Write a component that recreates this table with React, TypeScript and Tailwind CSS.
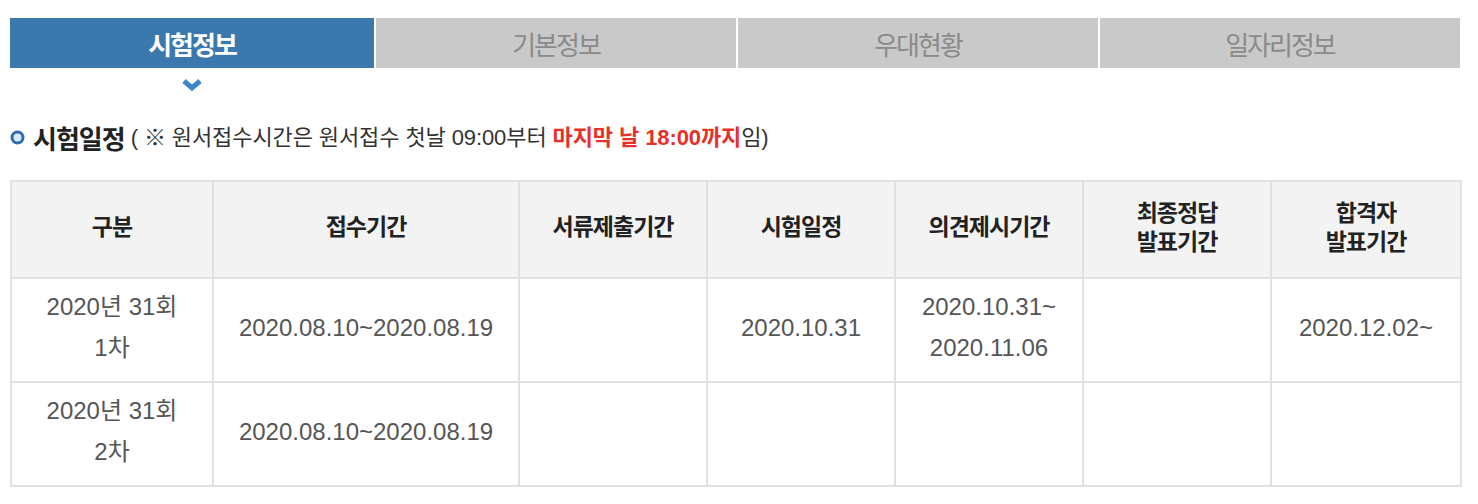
import React from 'react'

const tabs = ['시험정보', '기본정보', '우대현황', '일자리정보']

const headers: string[][] = [
  ['구분'],
  ['접수기간'],
  ['서류제출기간'],
  ['시험일정'],
  ['의견제시기간'],
  ['최종정답', '발표기간'],
  ['합격자', '발표기간'],
]

const colWidths = ['w-[202px]', 'w-[306px]', 'w-[188px]', 'w-[188px]', 'w-[188px]', 'w-[188px]', 'w-[190px]']

const rows: string[][][] = [
  [['2020년 31회', '1차'], ['2020.08.10~2020.08.19'], [], ['2020.10.31'], ['2020.10.31~', '2020.11.06'], [], ['2020.12.02~']],
  [['2020년 31회', '2차'], ['2020.08.10~2020.08.19'], [], [], [], [], []],
]

function Bullet() {
  return (
    <svg width="15" height="15" viewBox="0 0 15 15" className="shrink-0">
      <circle cx="7.5" cy="7.5" r="5.5" fill="#dbe9f6" stroke="#2f6cae" strokeWidth="3" />
    </svg>
  )
}

export default function App() {
  return (
    <div className="w-[1478px] h-[504px] bg-white pl-[10px] pt-[18px] font-['Liberation_Sans','Noto_Sans_CJK_KR',sans-serif]">
      <div className="w-[1450px]">
        {/* Tabs */}
        <div className="flex gap-[2px]">
          {tabs.map((t, i) => (
            <div
              key={t}
              className={
                i === 0
                  ? 'w-[364px] h-[50px] flex items-center justify-center bg-[#3a78ad] text-white font-bold text-[26px] tracking-[-2px] font-["Noto_Sans_CJK_KR",sans-serif]'
                  : 'flex-1 h-[50px] flex items-center justify-center bg-[#c9c9c9] text-[#8a8a8a] text-[26px] tracking-[-2px] font-["Noto_Sans_CJK_KR",sans-serif]'
              }
            >
              {t}
            </div>
          ))}
        </div>

        {/* active marker */}
        <div className="flex w-[364px] justify-center pt-[10px]">
          <svg width="22" height="14" viewBox="0 0 22 14">
            <polyline points="3,3 11,10 19,3" fill="none" stroke="#3f87c9" strokeWidth="5" strokeLinejoin="miter" />
          </svg>
        </div>

        {/* Heading */}
        <div className="flex items-center mt-[27px] h-[36px]">
          <Bullet />
          <span className="ml-[8px] font-['Noto_Sans_CJK_KR',sans-serif] font-bold text-[26px] tracking-[-1px] text-[#222]">시험일정</span>
          <span className="ml-[6px] text-[22px] tracking-[-0.1px] text-[#333]">
            ( ※ 원서접수시간은 원서접수 첫날 09:00부터{' '}
            <span className="font-bold text-[#e8302a]">마지막 날 18:00까지</span>임)
          </span>
        </div>

        {/* Table */}
        <table className="mt-[25px] w-[1450px] border-collapse table-fixed border-2 border-[#e1e1e1]">
          <thead>
            <tr className="h-[97px] bg-[#f3f3f3]">
              {headers.map((h, i) => (
                <th
                  key={i}
                  className={`${colWidths[i]} border-2 border-[#e1e1e1] font-['Noto_Sans_CJK_KR',sans-serif] font-bold text-[23px] tracking-[-1px] leading-[29px] text-[#222] pb-[8px]`}
                >
                  {h.map(l => (
                    <div key={l}>{l}</div>
                  ))}
                </th>
              ))}
            </tr>
          </thead>
          <tbody>
            {rows.map((r, ri) => (
              <tr key={ri} className="h-[104px]">
                {r.map((c, ci) => (
                  <td
                    key={ci}
                    className="border-2 border-[#e1e1e1] text-center text-[24px] leading-[41px] text-[#555] pb-[6px]"
                  >
                    {c.map(l => (
                      <div key={l}>{l}</div>
                    ))}
                  </td>
                ))}
              </tr>
            ))}
          </tbody>
        </table>
      </div>
    </div>
  )
}
